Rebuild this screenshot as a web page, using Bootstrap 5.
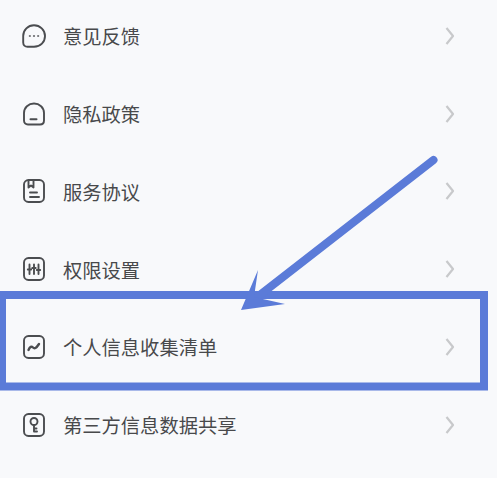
<!DOCTYPE html>
<html lang="zh">
<head>
<meta charset="utf-8">
<title>设置</title>
<link rel="stylesheet" href="https://cdn.jsdelivr.net/npm/bootstrap@5.3.0/dist/css/bootstrap.min.css">
<style>
html,body{height:100%;}
body{background:#f8f9fb;overflow:hidden;font-family:"Noto Sans CJK SC","Liberation Sans",sans-serif;}
.stage{width:497px;height:478px;overflow:hidden;}
.menu-list{margin-top:-3px;padding-left:22px;padding-right:42px;}
.menu-row{height:77.8px;}
.menu-ico{width:24px;height:24px;flex:none;fill:none;stroke:#4b4d50;stroke-width:1.9;stroke-linecap:round;stroke-linejoin:round;}
.menu-label{margin-left:17px;padding-top:2px;font-size:19.3px;font-weight:400;line-height:1;color:#48494b;white-space:nowrap;}
.menu-chev{width:10px;height:18px;flex:none;fill:none;stroke:#c8c9cb;stroke-width:2.2;stroke-linejoin:round;}
.mark-layer{left:0;top:0;width:497px;height:478px;}
</style>
</head>
<body>
<div class="stage position-relative">
  <div class="menu-list d-flex flex-column">
    <div class="menu-row d-flex align-items-center">
      <svg class="menu-ico" viewBox="0 0 24 24"><path d="M12 1.2C18 1.2 23 6 23 12C23 18 18.500 22.800 12 22.800H5.500C3 22.800 1.200 21 1.200 18.500V12C1.200 6 6 1.200 12 1.200Z"/><path d="M7.500 12H8.200M11.600 12H12.400M15.800 12H16.500" stroke-width="1.500"/></svg>
      <span class="menu-label">意见反馈</span>
      <svg class="menu-chev ms-auto" viewBox="0 0 10 18"><path d="M1.500 1L8 9L1.500 17"/></svg>
    </div>
    <div class="menu-row d-flex align-items-center">
      <svg class="menu-ico" viewBox="0 0 24 24"><path d="M12 1.500C17.500 1.500 22 5.500 22 11V18.500C22 20.800 20.500 22.500 18 22.500H6C3.500 22.500 2 20.800 2 18.500V11C2 5.500 6.500 1.500 12 1.500Z"/><path d="M8.500 17.200H14.500" stroke-width="2"/></svg>
      <span class="menu-label">隐私政策</span>
      <svg class="menu-chev ms-auto" viewBox="0 0 10 18"><path d="M1.500 1L8 9L1.500 17"/></svg>
    </div>
    <div class="menu-row d-flex align-items-center">
      <svg class="menu-ico" viewBox="0 0 24 24"><rect x="2" y="1" width="20" height="22" rx="4.500"/><path d="M6.500 1.500V8.500L9 6.500L11.500 8.500V1.500"/><path d="M8 13.500H15M8 18H17"/></svg>
      <span class="menu-label">服务协议</span>
      <svg class="menu-chev ms-auto" viewBox="0 0 10 18"><path d="M1.500 1L8 9L1.500 17"/></svg>
    </div>
    <div class="menu-row d-flex align-items-center">
      <svg class="menu-ico" viewBox="0 0 24 24"><rect x="2" y="1" width="20" height="22" rx="4.500"/><path d="M7.500 7.500V17M12 7.500V17M16.500 7.500V17M5.800 12.500H9.200M10.300 11H13.700M14.800 13H18.200"/></svg>
      <span class="menu-label">权限设置</span>
      <svg class="menu-chev ms-auto" viewBox="0 0 10 18"><path d="M1.500 1L8 9L1.500 17"/></svg>
    </div>
    <div class="menu-row d-flex align-items-center">
      <svg class="menu-ico" viewBox="0 0 24 24"><rect x="2" y="1" width="20" height="22" rx="4.500"/><path d="M6.500 15C8 11.500 9.500 11 11 12.500C12.500 14 14 13.500 17 9" stroke-width="2.400"/></svg>
      <span class="menu-label">个人信息收集清单</span>
      <svg class="menu-chev ms-auto" viewBox="0 0 10 18"><path d="M1.500 1L8 9L1.500 17"/></svg>
    </div>
    <div class="menu-row d-flex align-items-center">
      <svg class="menu-ico" viewBox="0 0 24 24"><rect x="2" y="1" width="20" height="22" rx="4.500"/><circle cx="12" cy="8.500" r="3.500"/><path d="M12 12V18.500H15M12 15.500H14.500"/></svg>
      <span class="menu-label">第三方信息数据共享</span>
      <svg class="menu-chev ms-auto" viewBox="0 0 10 18"><path d="M1.500 1L8 9L1.500 17"/></svg>
    </div>
  </div>
  <svg class="mark-layer position-absolute" viewBox="0 0 497 478">
    <rect x="2" y="295" width="482" height="91.500" fill="none" stroke="#5b7bd8" stroke-width="8"/>
    <path d="M433.500 160L256 298" fill="none" stroke="#5b7bd8" stroke-width="8" stroke-linecap="round"/>
    <path d="M241 310L258 270L254 297L285 304Z" fill="#5b7bd8"/>
  </svg>
</div>
<script src="https://cdn.jsdelivr.net/npm/bootstrap@5.3.0/dist/js/bootstrap.bundle.min.js"></script>
</body>
</html>
